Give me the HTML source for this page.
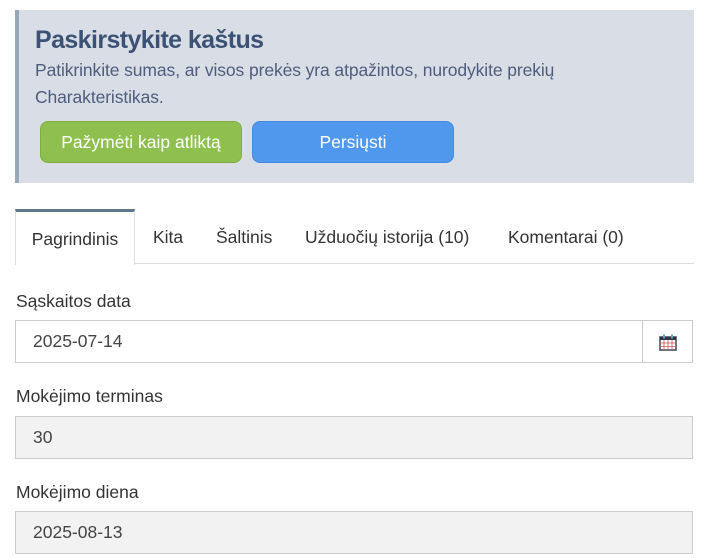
<!DOCTYPE html>
<html><head><meta charset="utf-8"><style>
body{margin:0;background:#fff;font-family:"Liberation Sans",sans-serif;width:706px;height:558px;overflow:hidden;position:relative}
.panel{position:absolute;left:15px;top:10px;width:675px;height:173px;background:#d9dde6;border-left:4px solid #97a7b8}
.t{position:absolute;left:16px;top:16px;font-size:25px;font-weight:bold;color:#3c5275;letter-spacing:-0.6px}
.d{position:absolute;left:16px;top:47px;font-size:17.5px;line-height:27px;color:#4d5d7c;width:580px;letter-spacing:-0.1px}
.b{position:absolute;top:111px;height:40px;border-radius:8px;color:#fff;font-size:17.5px;text-align:center;line-height:40px}
.g{left:21px;width:200px;background:#8fc04f;border:1px solid #7eae40}
.bl{left:233px;width:200px;background:#4f98ed;border:1px solid #448be0}
.tabs{position:absolute;left:15px;top:209px;width:679px;height:54px;border-bottom:1px solid #ddd}
.tab{position:absolute;top:0;height:54px;line-height:56px;font-size:17.5px;color:#333}
.act{left:0;width:118px;border-top:3px solid #5b7a8e;border-left:1px solid #ddd;border-right:1px solid #ddd;background:#fff;text-align:center;color:#333;height:53px;line-height:54px}
.lab{position:absolute;left:16px;font-size:17.5px;color:#333}
.inp{position:absolute;left:15px;width:676px;height:41px;border:1px solid #ccc;font-size:17.5px;color:#444;line-height:41px;text-indent:17px}
.dis{background:#f2f2f2}
.cal{position:absolute;right:0;top:0;width:49px;height:41px;border-left:1px solid #ccc}
</style></head><body>
<div class="panel">
<div class="t">Paskirstykite kaštus</div>
<div class="d">Patikrinkite sumas, ar visos prekės yra atpažintos, nurodykite prekių Charakteristikas.</div>
<div class="b g">Pažymėti kaip atliktą</div>
<div class="b bl">Persiųsti</div>
</div>
<div class="tabs">
<div class="tab act">Pagrindinis</div>
<div class="tab" style="left:138px">Kita</div>
<div class="tab" style="left:201px">Šaltinis</div>
<div class="tab" style="left:290px">Užduočių istorija (10)</div>
<div class="tab" style="left:493px">Komentarai (0)</div>
</div>
<div class="lab" style="top:291px">Sąskaitos data</div>
<div class="inp" style="top:320px">2025-07-14<div class="cal">
<svg style="position:absolute;left:16px;top:13px" width="18" height="17" viewBox="0 0 18 17"><rect x="1" y="3" width="16" height="13" fill="#fff" stroke="#445" stroke-width="1.5"/><rect x="1" y="3" width="16" height="3" fill="#334"/><path d="M1 9h16M1 12.5h16M5 6v10M9 6v10M13 6v10" stroke="#c55" stroke-width="0.8"/><rect x="4" y="0.5" width="2" height="4" fill="#5ab"/><rect x="12" y="0.5" width="2" height="4" fill="#5ab"/></svg></div></div>
<div class="lab" style="top:386px">Mokėjimo terminas</div>
<div class="inp dis" style="top:416px">30</div>
<div class="lab" style="top:482px">Mokėjimo diena</div>
<div class="inp dis" style="top:511px">2025-08-13</div>
</body></html>
